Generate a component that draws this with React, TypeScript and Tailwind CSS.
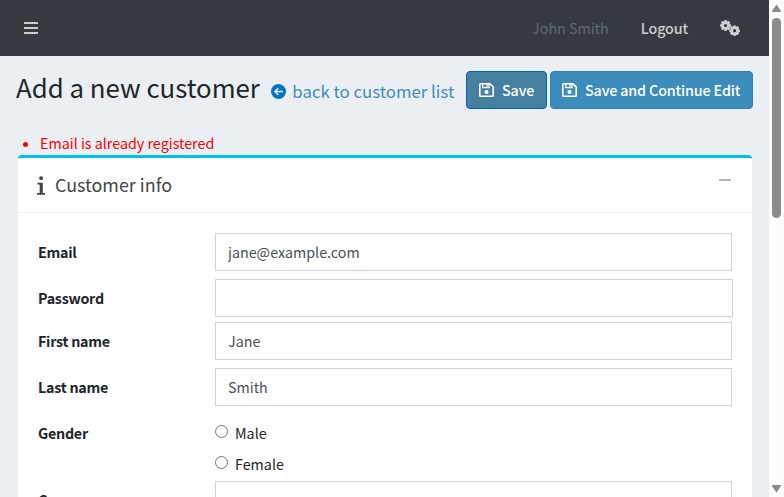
import type { ReactNode } from "react";

function BarsIcon() {
  return (
    <svg className="ml-6 h-3 w-[14px]" viewBox="0 0 14 12" fill="currentColor">
      <path d="M0 0h14v2H0zM0 5h14v2H0zM0 10h14v2H0z" />
    </svg>
  );
}

function CogsIcon() {
  const teeth = [0, 45, 90, 135];
  return (
    <svg className="mr-[29px] h-4 w-5" viewBox="0 0 20 16" fill="none" stroke="currentColor">
      <circle cx="5.6" cy="5.5" r="3.1" strokeWidth="3" />
      {teeth.map((a) => (
        <path key={a} transform={`rotate(${a} 5.6 5.5)`} d="M5.6 0v2.4M5.6 8.6v2.4" strokeWidth="2.4" />
      ))}
      <circle cx="14.6" cy="10.7" r="3.1" strokeWidth="3" />
      {teeth.map((a) => (
        <path key={a} transform={`rotate(${a} 14.6 10.7)`} d="M14.6 5.4v2.3M14.6 13.7v2.3" strokeWidth="2.4" />
      ))}
    </svg>
  );
}

function SaveIcon({ className }: { className: string }) {
  return (
    <svg className={`h-[14px] w-[15px] shrink-0 ${className}`} viewBox="0 0 15 14" fill="none" stroke="currentColor">
      <path d="M1.6 0.8H10.8L14.2 3.8V12.4Q14.2 13.2 13.4 13.2H1.6Q0.8 13.2 0.8 12.4V1.6Q0.8 0.8 1.6 0.8Z" strokeWidth="1.6" />
      <path d="M3.8 1V4.6H10V1M7.9 1V4.4" strokeWidth="1.3" />
      <circle cx="7.5" cy="9" r="2.1" fill="currentColor" stroke="none" />
    </svg>
  );
}

function BackIcon() {
  return (
    <svg className="mr-[6px] size-[15px] shrink-0" viewBox="0 0 15 15" fill="none">
      <circle cx="7.5" cy="7.5" r="7.5" fill="#0077c0" />
      <path d="M7.2 4.2L3.9 7.5L7.2 10.8M4 7.5H12" stroke="#ebeff4" strokeWidth="1.4" />
    </svg>
  );
}

function InfoIcon() {
  return (
    <svg className="mr-[10px] h-[19px] w-2" viewBox="0 0 8 19" fill="currentColor">
      <circle cx="4.1" cy="2.2" r="1.9" />
      <path d="M0.5 6.8H5.8V17H8V18.8H0V17H2.7V8.6H0.5Z" />
    </svg>
  );
}

function Row({ label, className, children }: { label: string; className: string; children: ReactNode }) {
  return (
    <div className={`flex ${className}`}>
      <label className="w-[177px] shrink-0 pt-[7px] leading-6 font-bold tracking-[-0.27px]">{label}</label>
      <div className="flex-1">{children}</div>
    </div>
  );
}

function Field({ value, wide = false }: { value?: string; wide?: boolean }) {
  return (
    <input
      type="text"
      defaultValue={value}
      className={`block h-[38px] border border-[#ced4da] bg-white px-3 pb-[2px] leading-6 text-[#495057] ${wide ? "w-[518px]" : "w-[517px]"}`}
    />
  );
}

function Radio({ label }: { label: string }) {
  return (
    <label className="flex h-[31px] items-start">
      <input type="radio" name="gender" className="mt-[4px] size-[13px]" />
      <span className="ml-[7px] leading-6">{label}</span>
    </label>
  );
}

export default function App() {
  return (
    <div className="flex h-[497px] w-[784px] overflow-hidden bg-[#ebeff4] font-['Noto_Sans_CJK_SC',sans-serif] text-[14.3px] text-[#212529]">
      <div className="w-[769px] shrink-0">
        <nav className="flex h-14 items-center bg-[#343a40] text-[#cccecf]">
          <BarsIcon />
          <span className="mr-[32px] ml-auto text-[#636a70]">John Smith</span>
          <span className="mr-[32px] font-medium tracking-[-0.12px]">Logout</span>
          <CogsIcon />
        </nav>
        <header className="flex h-[76px] items-start pt-[15px] pr-4 pl-4">
          <h1 className="-mt-[2px] text-[25.8px] leading-[35px] whitespace-nowrap">Add a new customer</h1>
          <a className="mt-[6px] ml-[11.5px] flex items-center text-[16.8px] leading-7 whitespace-nowrap text-[#3c8dbc]">
            <BackIcon />
            back to customer list
          </a>
          <button className="ml-auto flex h-[38px] w-[81px] items-center rounded border border-[#0062cc] bg-[#467fa0] pl-3 font-medium tracking-[-0.14px] whitespace-nowrap text-white">
            <SaveIcon className="mr-[8px]" />
            Save
          </button>
          <button className="ml-[3px] flex h-[38px] w-[203px] items-center rounded border border-[#367fa9] bg-[#3c8dbc] pl-[11px] font-medium tracking-[-0.14px] whitespace-nowrap text-white">
            <SaveIcon className="mr-[8px]" />
            Save and Continue Edit
          </button>
        </header>
        <ul className="flex h-[23px] items-start pl-[23px] text-[#ff0000]">
          <li className="-mt-[1px] flex items-center leading-6">
            <span className="mt-[2px] mr-[12px] size-[5px] rounded-full bg-[#ff0000]" />
            Email is already registered
          </li>
        </ul>
        <section className="mr-[17px] ml-[18px] h-[400px] rounded-t border-t-[3px] border-[#00c0ef] bg-white">
          <div className="flex h-[55px] items-center border-b border-[#f0f0f0] pr-[21px] pl-[19px] text-[17.9px] text-[#444]">
            <InfoIcon />
            <h2 className="pb-[2px]">Customer info</h2>
            <span className="mb-[10px] ml-auto h-[2px] w-3 bg-[#adb5bd]" />
          </div>
          <div className="pt-5 pl-5">
            <Row label="Email" className="h-[46px]"><Field value="jane@example.com" /></Row>
            <Row label="Password" className="h-[43px]"><Field wide /></Row>
            <Row label="First name" className="h-[46px]"><Field value="Jane" /></Row>
            <Row label="Last name" className="h-[46px]"><Field value="Smith" /></Row>
            <Row label="Gender" className="h-[67px]">
              <div className="pt-[7px]"><Radio label="Male" /><Radio label="Female" /></div>
            </Row>
            <Row label="Company" className="h-[46px]"><Field /></Row>
          </div>
        </section>
      </div>
      <aside className="flex w-[15px] shrink-0 flex-col items-center bg-[#fcfcfc]">
        <svg className="mt-[4px] h-[8px] w-[9px]" viewBox="0 0 9 8" fill="#8b8b8b"><path d="M4.5 0.5 L9 7 Q9 8 8 8 H1 Q0 8 0 7Z" /></svg>
        <div className="mt-[6px] h-[200px] w-[9px] rounded-full bg-[#8b8b8b]" />
        <svg className="mt-auto mb-[4px] h-[8px] w-[9px]" viewBox="0 0 9 8" fill="#8b8b8b"><path d="M4.5 7.5 L9 1 Q9 0 8 0 H1 Q0 0 0 1Z" /></svg>
      </aside>
    </div>
  );
}
